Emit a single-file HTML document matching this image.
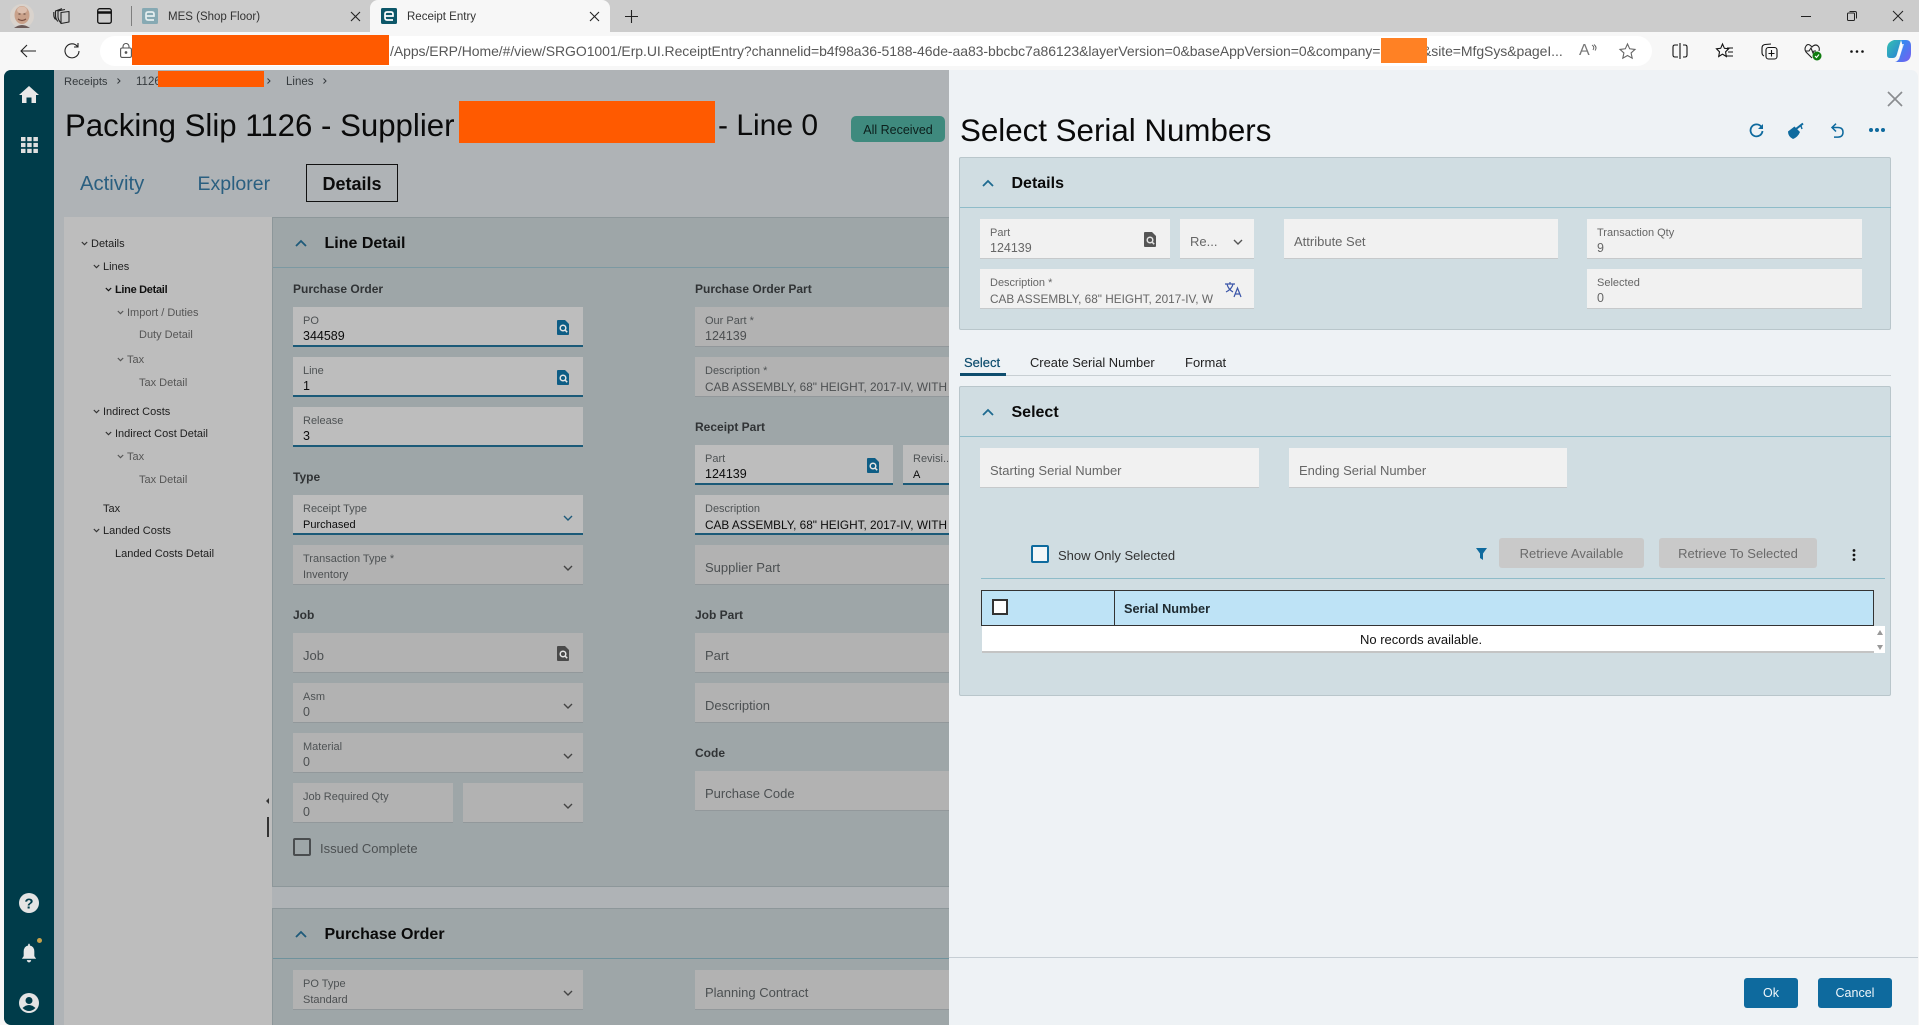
<!DOCTYPE html>
<html><head><meta charset="utf-8"><style>
html,body{margin:0;padding:0;width:1919px;height:1025px;overflow:hidden;background:#f7f7f7;font-family:"Liberation Sans",sans-serif}
.a{position:absolute}
.t{position:absolute;white-space:nowrap;line-height:20px}
svg{position:absolute;overflow:visible}
.f{position:absolute;height:40px;background:#b2b2b2;box-shadow:inset 0 -1px #92989b;overflow:hidden}
.f.on{background:#bdbdbd;box-shadow:inset 0 -2px #1b5a78}
.f.m{background:#f1f1f1;box-shadow:inset 0 -1px #c6c9cb}
.f i{position:absolute;left:10px;top:7px;font-style:normal;font-size:11px;line-height:14px;color:#4e5254;white-space:nowrap}
.f u{position:absolute;left:10px;top:23px;text-decoration:none;font-size:11px;line-height:14px;color:#4c4f51;white-space:nowrap}
.f u.n{font-size:12.5px;top:22px}
.f u.c{font-size:11.8px}
.f.on u{color:#0c0c0c}
.f em{position:absolute;left:10px;top:13px;font-style:normal;font-size:13px;line-height:20px;color:#4c5052;white-space:nowrap}
.f.m i,.f.m u,.f.m em{color:#666}
.tr{font-size:11px;color:#1e1e1e;transform:translateY(1px)}
.tg{font-size:11px;color:#555;transform:translateY(1px)}
.sec{font-size:12px;font-weight:bold;color:#303335}
.hd{font-size:16px;font-weight:bold;color:#0a0a0a;transform:translateY(1px)}
.or{position:absolute;background:#ff5a00}
.tool{color:#222}
</style></head><body>
<svg width="0" height="0" style="position:absolute"><defs>
<symbol id="dn" viewBox="0 0 10 6"><path d="M1 1l4 4 4-4" fill="none" stroke="currentColor" stroke-width="1.4"/></symbol>
<symbol id="up" viewBox="0 0 12 8"><path d="M1 7l5-5 5 5" fill="none" stroke="currentColor" stroke-width="1.8"/></symbol>
<symbol id="sd" viewBox="0 0 12 15"><path d="M1 0h7l4 4v10a1 1 0 0 1-1 1H1a1 1 0 0 1-1-1V1a1 1 0 0 1 1-1z" fill="currentColor"/><circle cx="6" cy="8" r="2.8" fill="none" stroke="#e4e4e4" stroke-width="1.5"/><path d="M8 10l2.2 2.2" stroke="#e4e4e4" stroke-width="1.5"/></symbol>
<symbol id="tc" viewBox="0 0 6 4"><path d="M.7.7L3 3 5.3.7" fill="none" stroke="currentColor" stroke-width="1"/></symbol>
</defs></svg>

<!-- tab strip -->
<div class="a" style="left:0;top:0;width:1919px;height:32px;background:#cccccc"></div>
<div class="a" style="left:370px;top:0;width:240px;height:32px;background:#f7f7f7;border-radius:8px 8px 0 0"></div>
<!-- avatar -->
<svg style="left:10px;top:4px" width="24" height="24" viewBox="0 0 24 24"><circle cx="12" cy="12" r="12" fill="#d9d3cd"/><ellipse cx="12" cy="11" rx="7.500" ry="9" fill="#c9a18a"/><ellipse cx="12" cy="6" rx="5" ry="3.500" fill="#dcbfae"/><path d="M8 15q4 3 8 0" stroke="#7a4f40" stroke-width="1.200" fill="none"/><path d="M8.500 10h2M13.500 10h2" stroke="#5a4036"/><path d="M4 24q8-6 16 0z" fill="#6b5a58"/></svg>
<svg style="left:53px;top:8px" width="17" height="16" viewBox="0 0 17 16" fill="none" stroke="#222" stroke-width="1.100"><path d="M8 4.500l8-1v10.500l-8 1.500z" stroke-linejoin="round"/><path d="M8 15Q5 12 5 8.500V3l7-1.500M5 13.500Q2.500 11 2.500 7.500V3L9 .7M2.500 11.500Q.8 9.500.8 7V4"/></svg>
<svg style="left:97px;top:8px" width="15" height="16" viewBox="0 0 15 16" fill="none" stroke="#111" stroke-width="1.3"><rect x=".7" y=".7" width="13.6" height="14.600" rx="2"/><path d="M.7 4.500h13.600" stroke-width="2.500"/></svg>
<div class="a" style="left:131px;top:6px;width:1px;height:20px;background:#7e7e7e"></div>
<svg style="left:142px;top:8px" width="16" height="16" viewBox="0 0 16 16"><rect width="16" height="16" rx="1.500" fill="#86a9b3"/><path d="M4 8h8V6.200Q12 4 10 4H6Q4 4 4 6.200v3.600Q4 12 6 12h6" fill="none" stroke="#e5eef0" stroke-width="1.700"/></svg>
<div class="t" style="left:168px;top:6.500px;font-size:11.500px;color:#333">MES (Shop Floor)</div>
<svg style="left:351px;top:12px" width="9" height="9" viewBox="0 0 9 9" stroke="#222" stroke-width="1.100"><path d="M0 0l9 9M9 0L0 9"/></svg>
<svg style="left:381px;top:8px" width="16" height="16" viewBox="0 0 16 16"><rect width="16" height="16" rx="1.500" fill="#0d5769"/><path d="M4 8h8V6.200Q12 4 10 4H6Q4 4 4 6.200v3.600Q4 12 6 12h6" fill="none" stroke="#fff" stroke-width="1.700"/></svg>
<div class="t" style="left:407px;top:6.500px;font-size:11.500px;color:#333">Receipt Entry</div>
<svg style="left:590px;top:12px" width="9" height="9" viewBox="0 0 9 9" stroke="#222" stroke-width="1.100"><path d="M0 0l9 9M9 0L0 9"/></svg>
<svg style="left:625px;top:10px" width="13" height="13" viewBox="0 0 13 13" stroke="#222" stroke-width="1.100"><path d="M6.500 0v13M0 6.500h13"/></svg>
<svg style="left:1801px;top:16px" width="10" height="1"><rect width="10" height="1" fill="#222"/></svg>
<svg style="left:1847px;top:11px" width="10" height="10" viewBox="0 0 10 10" fill="none" stroke="#222"><rect x=".5" y="2" width="7" height="7.500" rx="1"/><path d="M2.500 .5H8q1.500 0 1.500 1.500v5.500"/></svg>
<svg style="left:1893px;top:11px" width="10" height="10" viewBox="0 0 10 10" stroke="#222"><path d="M0 0l10 10M10 0L0 10"/></svg>

<!-- address bar -->
<div class="a" style="left:0;top:32px;width:1919px;height:38px;background:#f7f7f7"></div>
<div class="a" style="left:100px;top:36px;width:1552px;height:30px;background:#fff;border-radius:15px"></div>
<svg style="left:20px;top:44px" width="16" height="14" viewBox="0 0 16 14" fill="none" stroke="#222" stroke-width="1.100"><path d="M16 7H1M7 1L1 7l6 6"/></svg>
<svg style="left:64px;top:43px" width="16" height="16" viewBox="0 0 16 16" fill="none" stroke="#222" stroke-width="1.100"><path d="M13.500 3.500A7 7 0 1 0 15 8M10 4h4V0"/></svg>
<svg style="left:120px;top:43px" width="12" height="15" viewBox="0 0 12 15" fill="none" stroke="#555" stroke-width="1.100"><rect x=".6" y="5" width="10.800" height="9.400" rx="1.500"/><path d="M3 5V3.500a3 3 0 0 1 6 0V5"/><circle cx="6" cy="9.500" r=".8" fill="#555"/></svg>
<div class="t" style="left:390px;top:41px;font-size:14px;color:#585858;letter-spacing:-.065px">/Apps/ERP/Home/#/view/SRGO1001/Erp.UI.ReceiptEntry?channelid=b4f98a36-5188-46de-aa83-bbcbc7a86123&amp;layerVersion=0&amp;baseAppVersion=0&amp;company=</div>
<div class="t" style="left:1422px;top:41px;font-size:14px;color:#585858;letter-spacing:-.065px">&amp;site=MfgSys&amp;pageI...</div>
<div class="or" style="left:132px;top:35px;width:257px;height:30px"></div>
<div class="a" style="left:1381px;top:38px;width:46px;height:25px;background:#ff8124"></div>
<div class="t" style="left:1579px;top:41px;font-size:16px;color:#777">A</div>
<svg style="left:1591px;top:44px" width="6" height="8" viewBox="0 0 6 8" fill="none" stroke="#666"><path d="M1 1q3 2 1 5M3 .5q3.500 3 1 6"/></svg>
<svg style="left:1619px;top:43px" width="17" height="16" viewBox="0 0 17 16" fill="none" stroke="#666" stroke-width="1.100"><path d="M8.500 1l2.200 4.800 5.300.6-3.900 3.600 1.100 5.200-4.700-2.700-4.700 2.700 1.100-5.200L1 6.400l5.300-.6z"/></svg>
<svg style="left:1672px;top:43px" width="16" height="16" viewBox="0 0 16 16" fill="none" stroke="#111" stroke-width="1.100"><path d="M6 2H3Q1 2 1 4v8q0 2 2 2h3M11 2h2q2 0 2 2v8q0 2-2 2h-2M8 0v16"/></svg>
<svg style="left:1716px;top:43px" width="18" height="16" viewBox="0 0 18 16" fill="none" stroke="#111" stroke-width="1.100"><path d="M6.500 1L8.400 5.300l4.200.5-3 3 .7 4.700-3.800-2.300L2.700 13.500l.8-4.700L.5 5.800l4.200-.5zM11 5h6M12 9h5M10 13h7"/></svg>
<svg style="left:1761px;top:43px" width="17" height="17" viewBox="0 0 17 17" fill="none" stroke="#111" stroke-width="1.100"><rect x="5" y="4.500" width="11" height="11.500" rx="2.500"/><path d="M10.500 7v6.500M7.500 10.500h6M3 13Q1 12 1 9.500V5q0-3 3-3.500L10 1"/></svg>
<svg style="left:1804px;top:43px" width="18" height="18" viewBox="0 0 18 18" fill="none" stroke="#222" stroke-width="1.100"><path d="M8 15L2 9Q0 6 2 3t5 0l1 1 1-1q3-2 5 0t1 5M1 8h4l2-3 2 5 1-2h2"/><circle cx="13" cy="13" r="4.500" fill="#107c10" stroke="none"/><path d="M11 13l1.500 1.500 2.500-3" stroke="#fff"/></svg>
<svg style="left:1850px;top:50px" width="14" height="3"><circle cx="1.500" cy="1.500" r="1.300" fill="#111"/><circle cx="7" cy="1.500" r="1.300" fill="#111"/><circle cx="12.500" cy="1.500" r="1.300" fill="#111"/></svg>
<svg style="left:1887px;top:40px" width="24" height="22" viewBox="0 0 24 22"><defs><linearGradient id="c1" x1="0" y1="0" x2="1" y2="1"><stop offset="0" stop-color="#35c1b0"/><stop offset="1" stop-color="#2a7fd8"/></linearGradient><linearGradient id="c2" x1="0" y1="0" x2="1" y2="1"><stop offset="0" stop-color="#1a9bf0"/><stop offset="1" stop-color="#7a5cf0"/></linearGradient></defs><path d="M7 0h7l-4 14q-1 4-4 4H3q-3 0-3-3V9Q0 2 7 0z" fill="url(#c1)"/><path d="M14 0h5q5 0 5 6v7q0 9-9 9H8q4-1 5-6l2-8q1-3-1-8z" fill="url(#c2)"/><path d="M14 4l-4 12h3l4-12z" fill="#fff" opacity=".75"/></svg>

<!-- page -->
<div class="a" style="left:4px;top:70px;width:950px;height:955px;background:#afb3b6;border-radius:7px 0 0 7px;overflow:hidden"></div>
<div class="a" style="left:4px;top:70px;width:50px;height:955px;background:#003c4a;border-radius:7px 0 0 7px"></div>
<svg style="left:19px;top:86px" width="20" height="17" viewBox="0 0 20 17" fill="#e8e8e8"><path d="M10 0l10 9h-3v8h-4.500v-5.500h-5V17H3V9H0z"/></svg>
<svg style="left:20.500px;top:137px" width="17" height="16" fill="#e0e0e0"><rect width="4.500" height="4.200"/><rect x="6.200" width="4.500" height="4.200"/><rect x="12.400" width="4.500" height="4.200"/><rect y="5.900" width="4.500" height="4.200"/><rect x="6.200" y="5.900" width="4.500" height="4.200"/><rect x="12.400" y="5.900" width="4.500" height="4.200"/><rect y="11.800" width="4.500" height="4.200"/><rect x="6.200" y="11.800" width="4.500" height="4.200"/><rect x="12.400" y="11.800" width="4.500" height="4.200"/></svg>
<svg style="left:19px;top:893px" width="20" height="20" viewBox="0 0 20 20"><circle cx="10" cy="10" r="10" fill="#e4e4e4"/><text x="10" y="15.500" font-size="15" font-weight="bold" text-anchor="middle" fill="#003c4a" font-family="Liberation Sans">?</text></svg>
<svg style="left:21px;top:943px" width="16" height="20" viewBox="0 0 18 21" fill="#e8e8e8"><path d="M9 0q1 0 1 2 5 1 5 7v5l2 3H1l2-3V9q0-6 5-7 0-2 1-2zM6.500 18.500h5Q11 21 9 21t-2.500-2.500z"/></svg>
<div class="a" style="left:37px;top:938px;width:5px;height:5px;border-radius:50%;background:#c6a24c"></div>
<svg style="left:19px;top:993px" width="20" height="20" viewBox="0 0 20 20"><circle cx="10" cy="10" r="10" fill="#e4e4e4"/><circle cx="10" cy="7.500" r="3.500" fill="#003c4a"/><path d="M3.500 15q6.500-6 13 0-6.500 6-13 0z" fill="#003c4a"/></svg>

<div class="t" style="left:64px;top:71.500px;font-size:11.200px;color:#353a3d">Receipts</div>
<svg style="left:117px;top:78px;color:#353a3d" width="4" height="6" viewBox="0 0 4 6" fill="none" stroke="currentColor"><path d="M.5.500l2.500 2.500-2.500 2.500"/></svg>
<div class="t" style="left:136px;top:71.500px;font-size:11.500px;color:#353a3d">1126</div>
<div class="or" style="left:158px;top:71px;width:106px;height:16px"></div>
<svg style="left:267px;top:78px;color:#353a3d" width="4" height="6" viewBox="0 0 4 6" fill="none" stroke="currentColor"><path d="M.5.500l2.500 2.500-2.500 2.500"/></svg>
<div class="t" style="left:286px;top:71.500px;font-size:11.500px;color:#353a3d">Lines</div>
<svg style="left:323px;top:78px;color:#353a3d" width="4" height="6" viewBox="0 0 4 6" fill="none" stroke="currentColor"><path d="M.5.500l2.500 2.500-2.500 2.500"/></svg>

<div class="t" style="left:65px;top:116px;font-size:31.200px;color:#0a0a0a">Packing Slip 1126 - Supplier</div>
<div class="or" style="left:459px;top:101px;width:256px;height:42px"></div>
<div class="t" style="left:718px;top:116px;font-size:30px;color:#0a0a0a">- Line 0</div>
<div class="a" style="left:851px;top:116px;width:94px;height:26px;background:#3f8a7e;border-radius:5px"></div>
<div class="t" style="left:851px;top:119.500px;width:94px;text-align:center;font-size:12.500px;color:#0c1f1c">All Received</div>

<div class="t" style="left:80px;top:174px;font-size:20.300px;color:#2a5f80">Activity</div>
<div class="t" style="left:197.500px;top:174px;font-size:19.500px;color:#2a5f80">Explorer</div>
<div class="a" style="left:306px;top:164px;width:90px;height:36px;border:1.500px solid #111"></div>
<div class="t" style="left:322.500px;top:174px;font-size:18px;font-weight:bold;color:#0c0c0c">Details</div>

<!-- tree -->
<div class="a" style="left:64px;top:217px;width:208px;height:808px;background:#bdbdbd"></div>
<svg style="left:81px;top:241px;color:#333" width="7" height="5"><use href="#tc" width="7" height="5"/></svg><div class="t tr" style="left:91px;top:233px">Details</div>
<svg style="left:93px;top:264px;color:#333" width="7" height="5"><use href="#tc" width="7" height="5"/></svg><div class="t tr" style="left:103px;top:256px">Lines</div>
<svg style="left:105px;top:287px;color:#111" width="7" height="5"><use href="#tc" width="7" height="5"/></svg><div class="t tr" style="left:115px;top:279px;font-weight:bold;letter-spacing:-.3px;color:#111">Line Detail</div>
<svg style="left:117px;top:310px;color:#555" width="7" height="5"><use href="#tc" width="7" height="5"/></svg><div class="t tg" style="left:127px;top:302px">Import / Duties</div>
<div class="t tg" style="left:139px;top:324px">Duty Detail</div>
<svg style="left:117px;top:357px;color:#555" width="7" height="5"><use href="#tc" width="7" height="5"/></svg><div class="t tg" style="left:127px;top:349px">Tax</div>
<div class="t tg" style="left:139px;top:372px">Tax Detail</div>
<svg style="left:93px;top:409px;color:#333" width="7" height="5"><use href="#tc" width="7" height="5"/></svg><div class="t tr" style="left:103px;top:401px">Indirect Costs</div>
<svg style="left:105px;top:431px;color:#333" width="7" height="5"><use href="#tc" width="7" height="5"/></svg><div class="t tr" style="left:115px;top:423px">Indirect Cost Detail</div>
<svg style="left:117px;top:454px;color:#555" width="7" height="5"><use href="#tc" width="7" height="5"/></svg><div class="t tg" style="left:127px;top:446px">Tax</div>
<div class="t tg" style="left:139px;top:469px">Tax Detail</div>
<div class="t tr" style="left:103px;top:498px">Tax</div>
<svg style="left:93px;top:528px;color:#333" width="7" height="5"><use href="#tc" width="7" height="5"/></svg><div class="t tr" style="left:103px;top:520px">Landed Costs</div>
<div class="t tr" style="left:115px;top:543px">Landed Costs Detail</div>

<!-- panels -->
<div class="a" style="left:272px;top:217px;width:680px;height:670px;background:#9ea6a8;box-shadow:inset 1px 1px #8d979a,inset 0 -1px #8d979a"></div>
<div class="a" style="left:273px;top:267px;width:680px;height:1px;background:#7c99a2"></div>
<div class="a" style="left:272px;top:908px;width:680px;height:117px;background:#9ea6a8;box-shadow:inset 1px 1px #8d979a"></div>
<div class="a" style="left:273px;top:958px;width:680px;height:1px;background:#6f929c"></div>
<svg style="left:295px;top:239px;color:#1e5a7a" width="12" height="8"><use href="#up" width="12" height="8"/></svg>
<div class="t hd" style="left:324.500px;top:233px">Line Detail</div>
<svg style="left:295px;top:930px;color:#1e5a7a" width="12" height="8"><use href="#up" width="12" height="8"/></svg>
<div class="t hd" style="left:324.500px;top:924px">Purchase Order</div>
<div class="a" style="left:267px;top:817px;width:1.500px;height:20px;background:#333"></div>
<div class="a" style="left:266px;top:798px;border:3px solid transparent;border-right:3px solid #333;border-left:0"></div>

<div class="t sec" style="left:293px;top:279px">Purchase Order</div>
<div class="f on" style="left:293px;top:307px;width:290px"><i>PO</i><u class="n">344589</u><svg style="left:264px;top:13px;color:#0e5d85" width="12" height="15"><use href="#sd" width="12" height="15"/></svg></div>
<div class="f on" style="left:293px;top:357px;width:290px"><i>Line</i><u class="n">1</u><svg style="left:264px;top:13px;color:#0e5d85" width="12" height="15"><use href="#sd" width="12" height="15"/></svg></div>
<div class="f on" style="left:293px;top:407px;width:290px"><i>Release</i><u class="n">3</u></div>
<div class="t sec" style="left:293px;top:467px">Type</div>
<div class="f on" style="left:293px;top:495px;width:290px"><i>Receipt Type</i><u>Purchased</u><svg style="left:270px;top:20px;color:#1e5a7a" width="10" height="6"><use href="#dn" width="10" height="6"/></svg></div>
<div class="f" style="left:293px;top:545px;width:290px"><i>Transaction Type *</i><u>Inventory</u><svg style="left:270px;top:20px;color:#444" width="10" height="6"><use href="#dn" width="10" height="6"/></svg></div>
<div class="t sec" style="left:293px;top:605px">Job</div>
<div class="f" style="left:293px;top:633px;width:290px"><em>Job</em><svg style="left:264px;top:13px;color:#4a4a4a" width="12" height="15"><use href="#sd" width="12" height="15"/></svg></div>
<div class="f" style="left:293px;top:683px;width:290px"><i>Asm</i><u class="n">0</u><svg style="left:270px;top:20px;color:#444" width="10" height="6"><use href="#dn" width="10" height="6"/></svg></div>
<div class="f" style="left:293px;top:733px;width:290px"><i>Material</i><u class="n">0</u><svg style="left:270px;top:20px;color:#444" width="10" height="6"><use href="#dn" width="10" height="6"/></svg></div>
<div class="f" style="left:293px;top:783px;width:160px"><i>Job Required Qty</i><u class="n">0</u></div>
<div class="f" style="left:463px;top:783px;width:120px"><svg style="left:100px;top:20px;color:#444" width="10" height="6"><use href="#dn" width="10" height="6"/></svg></div>
<div class="a" style="left:293px;top:838px;width:14px;height:14px;border:2px solid #4a4d4f;border-radius:2px"></div>
<div class="t" style="left:320px;top:838.500px;font-size:13px;color:#4c5052">Issued Complete</div>
<div class="f" style="left:293px;top:970px;width:290px"><i>PO Type</i><u>Standard</u><svg style="left:270px;top:20px;color:#444" width="10" height="6"><use href="#dn" width="10" height="6"/></svg></div>

<div class="t sec" style="left:695px;top:279px">Purchase Order Part</div>
<div class="f" style="left:695px;top:307px;width:254px"><i>Our Part *</i><u class="n">124139</u></div>
<div class="f" style="left:695px;top:357px;width:254px"><i>Description *</i><u class="c">CAB ASSEMBLY, 68" HEIGHT, 2017-IV, WITH</u></div>
<div class="t sec" style="left:695px;top:417px">Receipt Part</div>
<div class="f on" style="left:695px;top:445px;width:198px"><i>Part</i><u class="n">124139</u><svg style="left:172px;top:13px;color:#0e5d85" width="12" height="15"><use href="#sd" width="12" height="15"/></svg></div>
<div class="f on" style="left:903px;top:445px;width:46px"><i>Revisi...</i><u>A</u></div>
<div class="f on" style="left:695px;top:495px;width:254px"><i>Description</i><u class="c">CAB ASSEMBLY, 68" HEIGHT, 2017-IV, WITH</u></div>
<div class="f" style="left:695px;top:545px;width:254px"><em>Supplier Part</em></div>
<div class="t sec" style="left:695px;top:605px">Job Part</div>
<div class="f" style="left:695px;top:633px;width:254px"><em>Part</em></div>
<div class="f" style="left:695px;top:683px;width:254px"><em>Description</em></div>
<div class="t sec" style="left:695px;top:743px">Code</div>
<div class="f" style="left:695px;top:771px;width:254px"><em>Purchase Code</em></div>
<div class="f" style="left:695px;top:970px;width:254px"><em>Planning Contract</em></div>

<!-- modal -->
<div class="a" style="left:949px;top:70px;width:969px;height:955px;background:#eef2f5;border-radius:0 7px 0 0"></div>
<svg style="left:1888px;top:92px" width="14" height="14" viewBox="0 0 14 14" stroke="#8a8d90" stroke-width="1.700"><path d="M0 0l14 14M14 0L0 14"/></svg>
<div class="t" style="left:960px;top:121px;font-size:31.300px;color:#0a0a0a">Select Serial Numbers</div>
<svg style="left:1749px;top:123px" width="15" height="15" viewBox="0 0 15 15" fill="none" stroke="#0e6a9e" stroke-width="1.800"><path d="M12.500 4A6 6 0 1 0 13.500 8"/><path d="M14 1v5H9z" fill="#0e6a9e" stroke="none"/></svg>
<svg style="left:1788px;top:123px" width="16" height="16" viewBox="0 0 16 16" fill="#0e6a9e"><path d="M0 8.500l6.500-5L12 9q-2 5-7 7Q0 13.500 0 8.500z"/><path d="M8 6l7-5.500" stroke="#0e6a9e" stroke-width="2" fill="none"/><path d="M12.500 1.500l1.500 4.500" stroke="#0e6a9e" stroke-width="1.400" fill="none"/></svg>
<svg style="left:1830px;top:123px" width="14" height="15" viewBox="0 0 14 15" fill="none" stroke="#0e6a9e" stroke-width="1.500"><path d="M6 .7L2 4.500l4 4M2 4.500h6q5 0 5 4.800t-5 4.800H4"/></svg>
<svg style="left:1869px;top:128px" width="16" height="4" fill="#0e6a9e"><circle cx="2" cy="2" r="2"/><circle cx="8" cy="2" r="2"/><circle cx="14" cy="2" r="2"/></svg>

<div class="a" style="left:959px;top:157px;width:932px;height:173px;box-sizing:border-box;background:#d0dde2;border:1px solid #b9c6cb;border-radius:2px"></div>
<div class="a" style="left:960px;top:207px;width:931px;height:1px;background:#8fbcc9"></div>
<svg style="left:982px;top:179px;color:#1e6a90" width="12" height="8"><use href="#up" width="12" height="8"/></svg>
<div class="t hd" style="left:1011.500px;top:173px">Details</div>
<div class="f m" style="left:980px;top:219px;width:190px"><i>Part</i><u class="n">124139</u><svg style="left:164px;top:13px;color:#555" width="12" height="15"><use href="#sd" width="12" height="15"/></svg></div>
<div class="f m" style="left:1180px;top:219px;width:74px"><em>Re...</em><svg style="left:53px;top:20px;color:#555" width="10" height="6"><use href="#dn" width="10" height="6"/></svg></div>
<div class="f m" style="left:980px;top:269px;width:274px"><i>Description *</i><u class="c">CAB ASSEMBLY, 68" HEIGHT, 2017-IV, W</u><svg style="left:245px;top:13px" width="17" height="15" viewBox="0 0 17 15" fill="none" stroke="#3a55a8" stroke-width="1.200"><path d="M0 2h10M5 0v2M2 2q1 5 6 8M8 2q-1 5-7 8M9 15l3.500-9 3.500 9M10 12h5"/></svg></div>
<div class="f m" style="left:1284px;top:219px;width:273.500px"><em>Attribute Set</em></div>
<div class="f m" style="left:1587px;top:219px;width:275px"><i>Transaction Qty</i><u class="n">9</u></div>
<div class="f m" style="left:1587px;top:269px;width:275px"><i>Selected</i><u class="n">0</u></div>

<div class="t" style="left:964px;top:353px;font-size:13px;color:#0e4d6e;-webkit-text-stroke:.2px #0e4d6e">Select</div>
<div class="t" style="left:1030px;top:353px;font-size:12.900px;color:#222">Create Serial Number</div>
<div class="t" style="left:1185px;top:353px;font-size:13px;color:#222">Format</div>
<div class="a" style="left:960px;top:375px;width:931px;height:1px;background:#c8cfd3"></div>
<div class="a" style="left:959.500px;top:373px;width:46px;height:3px;background:#0e4d6e"></div>

<div class="a" style="left:959px;top:386px;width:932px;height:310px;background:#d0dde2;border:1px solid #b9c6cb;border-radius:2px;box-sizing:border-box"></div>
<div class="a" style="left:960px;top:436px;width:931px;height:1px;background:#8fbcc9"></div>
<svg style="left:982px;top:408px;color:#1e6a90" width="12" height="8"><use href="#up" width="12" height="8"/></svg>
<div class="t hd" style="left:1011.500px;top:402px">Select</div>
<div class="f m" style="left:980px;top:448px;width:279px"><em>Starting Serial Number</em></div>
<div class="f m" style="left:1289px;top:448px;width:278px"><em>Ending Serial Number</em></div>
<div class="a" style="left:1031px;top:545px;width:14px;height:14px;border:2.500px solid #0e6a9e;border-radius:2px;background:#f2f6f8"></div>
<div class="t" style="left:1058px;top:545.500px;font-size:13px;color:#333">Show Only Selected</div>
<svg style="left:1476px;top:548px" width="11" height="12" viewBox="0 0 11 12" fill="#0e6a9e"><path d="M0 0h11L7 5.500V12L4 10V5.500z"/></svg>
<div class="a" style="left:1499px;top:538px;width:145px;height:30px;background:#c9c9c9;border-radius:3px"></div>
<div class="t" style="left:1499px;top:543.500px;width:145px;text-align:center;font-size:13px;color:#6a6a6a">Retrieve Available</div>
<div class="a" style="left:1659px;top:538px;width:158px;height:30px;background:#c9c9c9;border-radius:3px"></div>
<div class="t" style="left:1659px;top:543.500px;width:158px;text-align:center;font-size:13px;color:#6a6a6a">Retrieve To Selected</div>
<svg style="left:1852px;top:549px" width="4" height="12" fill="#111"><circle cx="2" cy="1.500" r="1.400"/><circle cx="2" cy="6" r="1.400"/><circle cx="2" cy="10.500" r="1.400"/></svg>
<div class="a" style="left:981px;top:578px;width:904px;height:1px;background:#8fbcc9"></div>

<div class="a" style="left:982px;top:626px;width:892px;height:25px;background:#fff;box-shadow:0 2px #c4c4c4"></div>
<div class="a" style="left:1874px;top:626px;width:11px;height:27px;background:#fff"></div>
<div class="a" style="left:1876.500px;top:630px;border:3.500px solid transparent;border-bottom:5px solid #999;border-top:0"></div>
<div class="a" style="left:1876.500px;top:645px;border:3.500px solid transparent;border-top:5px solid #999;border-bottom:0"></div>
<div class="a" style="left:981px;top:590px;width:893px;height:36px;background:#bee3f6;border:1.500px solid #333;box-sizing:border-box"></div>
<div class="a" style="left:1113.500px;top:590px;width:1.500px;height:36px;background:#333"></div>
<div class="a" style="left:992px;top:599px;width:12px;height:12px;border:2.500px solid #333;background:#fff"></div>
<div class="t" style="left:1124px;top:599px;font-size:12.700px;font-weight:bold;color:#1e2a30">Serial Number</div>
<div class="t" style="left:1360px;top:629.500px;font-size:13px;color:#111">No records available.</div>

<div class="a" style="left:949px;top:957px;width:969px;height:1px;background:#c6ced4"></div>
<div class="a" style="left:1744px;top:978px;width:54px;height:30px;background:#0e6a9e;border-radius:3px"></div>
<div class="t" style="left:1744px;top:983px;width:54px;text-align:center;font-size:12.500px;color:#f0f6fa">Ok</div>
<div class="a" style="left:1818px;top:978px;width:74px;height:30px;background:#0e6a9e;border-radius:3px"></div>
<div class="t" style="left:1818px;top:983px;width:74px;text-align:center;font-size:12.500px;color:#f0f6fa">Cancel</div>
</body></html>
